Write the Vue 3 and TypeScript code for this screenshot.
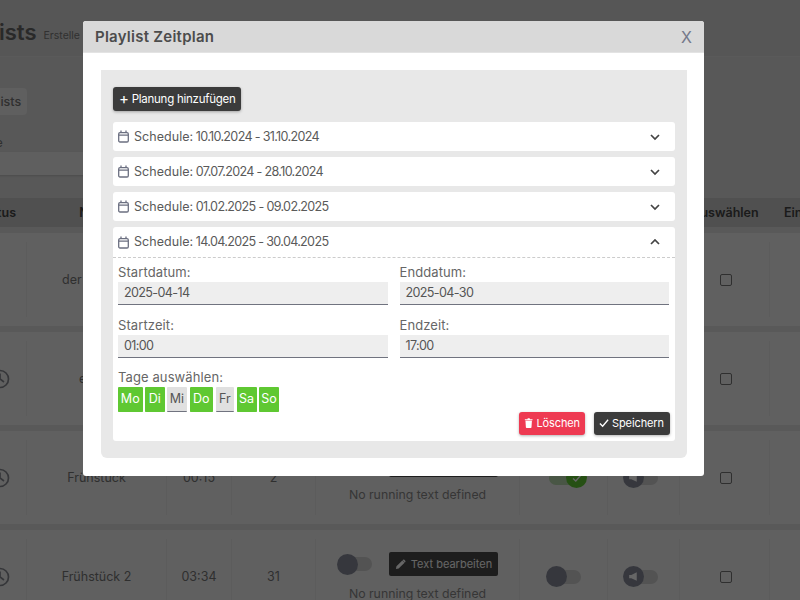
<script setup lang="ts">
const closed = ['10.10.2024 - 31.10.2024', '07.07.2024 - 28.10.2024', '01.02.2025 - 09.02.2025']
const days = [
  { n: 'Mo', on: true, w: 24.5 }, { n: 'Di', on: true, w: 19.5 }, { n: 'Mi', on: false, w: 20 }, { n: 'Do', on: true, w: 23.5 },
  { n: 'Fr', on: false, w: 18.5 }, { n: 'Sa', on: true, w: 20 }, { n: 'So', on: true, w: 20 },
]
const rows = [
  { name: 'der Morgen', time: '', count: '', text: false, clock: false, on: false },
  { name: 'essen', time: '', count: '', text: false, clock: true, on: false },
  { name: 'Frühstück', time: '00:15', count: '2', text: true, clock: true, on: true },
  { name: 'Frühstück 2', time: '03:34', count: '31', text: true, clock: true, on: false },
]
</script>

<template>
  <div class="page">
    <div class="behind">
      <header class="head"><h1>Playlists</h1><span class="sub">Erstelle und verwalte Playlists</span></header>
      <div class="tools">
        <span class="tab">Playlists</span>
        <span class="lbl">Suche</span>
        <div class="search"></div>
      </div>
      <div class="tbody">
        <div class="thead">
          <span class="c0">Status</span><span class="c1">Name</span><span class="c2"></span><span class="c3"></span>
          <span class="c4"></span><span class="c5"></span><span class="c6"></span><span class="c7">Auswählen</span><span class="c8">Einstellungen</span>
        </div>
        <div v-for="r in rows" :key="r.name" class="row">
          <div class="c0 cell">
            <svg v-if="r.clock" width="20" height="20" viewBox="0 0 20 20" fill="none" stroke="#85878f" stroke-width="1.700"><circle cx="10" cy="10" r="8.500"/><path d="M10 4.500V10l4 3"/></svg>
          </div>
          <div class="c1 cell">{{ r.name }}</div>
          <div class="c2 cell">{{ r.time }}</div>
          <div class="c3 cell">{{ r.count }}</div>
          <div class="c4 cell stack">
            <div v-if="r.text" class="textline">
              <span class="tog small"><i></i></span>
              <span class="editbtn">
                <svg width="11" height="11" viewBox="0 0 12 12" fill="#fff"><path d="M1 11l.6-3L8 1.600 10.400 4 4 10.400zM8.800.8a1 1 0 0 1 1.400 0l1 1a1 1 0 0 1 0 1.400l-.5.500L8.300 1.300z"/></svg>
                Text bearbeiten
              </span>
            </div>
            <span v-if="r.text" class="norun">No running text defined</span>
          </div>
          <div class="c5 cell"><span v-if="r.text" class="tog" :class="{ on: r.on }"><i><svg v-if="r.on" width="12" height="12" viewBox="0 0 12 12" fill="none" stroke="#fff" stroke-width="1.500"><path d="M2 6.500l2.800 2.500L10 3"/></svg></i></span></div>
          <div class="c6 cell"><span v-if="r.text" class="tog snd"><i><svg width="13" height="13" viewBox="0 0 12 12" fill="#fff"><path d="M2 4.500h2L9 2v8L4 7.500H2z"/></svg></i></span></div>
          <div class="c7 cell"><span class="check"></span></div>
          <div class="c8 cell"></div>
        </div>
      </div>
    </div>

    <div class="overlay">
      <div class="modal">
        <div class="mhead"><span class="mtitle">Playlist Zeitplan</span><span class="close">X</span></div>
        <div class="mbody">
          <div class="panel">
            <button class="btn dark add"><span class="plus">+</span> Planung hinzufügen</button>
            <div v-for="c in closed" :key="c" class="acc">
              <div class="acchead">
                <svg class="cal" width="11" height="13" viewBox="0 0 11 13" fill="none" stroke="#6b6f80" stroke-width="1.300"><rect x=".7" y="2.700" width="9.600" height="9.300" rx="1.300"/><path d="M.7 5.200h9.600M3 .5V3M8 .5V3"/></svg>
                <span class="sched"><span class="word">Schedule:</span> <span class="num">{{ c }}</span></span>
                <svg class="chev" width="12" height="12" viewBox="0 0 12 12" fill="none" stroke="#444" stroke-width="1.700"><path d="M2 4l4 4 4-4"/></svg>
              </div>
            </div>
            <div class="acc open">
              <div class="acchead dashed">
                <svg class="cal" width="11" height="13" viewBox="0 0 11 13" fill="none" stroke="#6b6f80" stroke-width="1.300"><rect x=".7" y="2.700" width="9.600" height="9.300" rx="1.300"/><path d="M.7 5.200h9.600M3 .5V3M8 .5V3"/></svg>
                <span class="sched"><span class="word">Schedule:</span> <span class="num">14.04.2025 - 30.04.2025</span></span>
                <svg class="chev" width="12" height="12" viewBox="0 0 12 12" fill="none" stroke="#444" stroke-width="1.700"><path d="M2 8l4-4 4 4"/></svg>
              </div>
              <div class="accbody">
                <div class="grid">
                  <label class="field"><span>Startdatum:</span><div class="input">2025-04-14</div></label>
                  <label class="field"><span>Enddatum:</span><div class="input">2025-04-30</div></label>
                  <label class="field"><span>Startzeit:</span><div class="input">01:00</div></label>
                  <label class="field"><span>Endzeit:</span><div class="input">17:00</div></label>
                </div>
                <div class="dayslbl">Tage auswählen:</div>
                <div class="days">
                  <span v-for="d in days" :key="d.n" class="day" :class="{ on: d.on }" :style="{ width: d.w + 'px' }">{{ d.n }}</span>
                </div>
                <div class="actions">
                  <button class="btn red">
                    <svg width="11" height="12" viewBox="0 0 11 12" fill="#fff"><path d="M1 1.500h3l.4-1h2.200l.4 1h3v1.200H1zM1.700 3.500h7.600l-.5 7.600a.9.900 0 0 1-.9.900H3.100a.9.900 0 0 1-.9-.9z"/></svg>
                    Löschen
                  </button>
                  <button class="btn dark save">
                    <svg width="10" height="10" viewBox="0 0 11 10" fill="none" stroke="#fff" stroke-width="1.500"><path d="M1 5.500l3 3 6-7"/></svg>
                    Speichern
                  </button>
                </div>
              </div>
            </div>
          </div>
        </div>
      </div>
    </div>
  </div>
</template>

<style>
html, body { margin: 0; }
</style>

<style scoped>
.page { position: relative; width: 800px; height: 600px; overflow: hidden; font-family: Inter, "Liberation Sans", sans-serif; background: #e4e4e4; }
.behind { width: 900px; margin-left: -50px; color: #666; }
.head { height: 57px; display: flex; align-items: center; gap: 7px; background: #d6d6d6; border-bottom: 1px solid #e0e0e0; box-sizing: border-box; padding-top: 8px; }
.head h1 { margin: 0 0 0 -2px; font-size: 22px; font-weight: 600; color: #666; white-space: nowrap; }
.sub { font-size: 10.500px; color: #7a7a7a; padding-top: 6px; white-space: nowrap; }
.tools { height: 141px; background: #dcdcdc; padding-top: 31px; box-sizing: border-box; display: flex; flex-direction: column; align-items: flex-start; }
.tab { font-size: 12.500px; font-weight: 500; line-height: 15px; padding: 6px; margin-left: 16px; background: #ededed; border-radius: 4px; color: #777; }
.lbl { font-size: 12px; line-height: 15px; margin-top: 20px; padding-left: 17px; color: #777; }
.search { width: 300px; height: 23px; margin-top: 2px; background: #eee; box-shadow: 0 1px 2px #bbb; }
.tbody { background: #dedede; }
.thead { display: flex; align-items: center; height: 29px; background: #c8c8c8; font-size: 12.500px; font-weight: 600; color: #444; margin-bottom: 6px; }
.thead span { text-align: center; white-space: nowrap; overflow: hidden; }
.thead .c0 { text-align: right; padding-right: 11px; }
.thead .c8 { text-align: left; padding-left: 14px; }
.row { display: flex; height: 93px; padding: 9px 0; box-sizing: border-box; background: #f0f0f0; margin-bottom: 6px; font-size: 12.500px; color: #777; }
.cell { display: flex; align-items: center; justify-content: center; border-right: 1px solid #e6e6e6; box-sizing: border-box; }
.c0 { width: 77px; flex: none; box-sizing: border-box; }
.row .c0 { justify-content: flex-end; padding-right: 16px; }
.c1 { width: 140px; flex: none; }
.c2 { width: 65px; flex: none; }
.c3 { width: 84px; flex: none; }
.c4 { width: 204px; flex: none; }
.c5 { width: 88px; flex: none; }
.c6 { width: 72px; flex: none; }
.c7 { width: 90px; flex: none; }
.c8 { width: 80px; flex: none; box-sizing: border-box; }
.row .c8 { border-right: 0; }
.stack { flex-direction: column; gap: 10px; }
.textline { display: flex; align-items: center; gap: 17px; }
.editbtn { display: inline-flex; align-items: center; gap: 5px; height: 24px; padding: 0 6px; background: #4a4a4a; border-radius: 2px; color: #fff; font-size: 11px; box-sizing: border-box; white-space: nowrap; }
.norun { font-size: 12.300px; line-height: 15px; color: #888; }
.tog { position: relative; display: inline-block; width: 32px; height: 14px; background: #cfcfcf; border-radius: 7px; margin-left: 3px; }
.tog i { position: absolute; left: -3px; top: -3.500px; width: 21px; height: 21px; border-radius: 50%; background: #878b9a; display: flex; align-items: center; justify-content: center; }
.tog.snd { margin-left: 0; margin-right: 3px; }
.tog.on { background: #b7d6ac; }
.tog.on i { left: auto; right: -6px; background: #5fc832; }
.check { width: 12px; height: 12px; box-sizing: border-box; border: 1px solid #777; border-radius: 2px; margin-left: 2px; }

.overlay { position: absolute; inset: 0; background: rgba(0, 0, 0, 0.6); display: flex; justify-content: flex-start; align-items: flex-start; padding: 21px 0 0 83px; box-sizing: border-box; }
.modal { width: 621px; height: 455px; background: #fff; border-radius: 3px; overflow: hidden; color: #555; }
.mhead { height: 31px; padding: 0 12px; background: #d9d9d9; display: flex; justify-content: space-between; align-items: center; border-bottom: 1px solid #e3e3e3; }
.mtitle { font-size: 15px; font-weight: 600; color: #4c4c4c; letter-spacing: 0.25px; }
.close { font-size: 16px; color: #74788a; font-weight: 400; }
.mbody { padding: 17px 17px 17px 18px; }
.panel { background: #e8e8e8; border-radius: 0 0 6px 6px; padding: 17px 12px; height: 388px; box-sizing: border-box; }
.btn { display: inline-flex; align-items: center; gap: 3px; border: 0; border-radius: 3px; font-family: inherit; font-size: 11.500px; font-weight: 400; color: #fff; box-shadow: 0 1px 3px rgba(0,0,0,.3); height: 23.500px; padding: 0 6px; box-sizing: border-box; white-space: nowrap; }
.dark { background: #3b3b3b; }
.red { background: #ee3a52; }
.add { margin-bottom: 11.500px; width: 128px; letter-spacing: -0.25px; }
.plus { font-size: 15px; font-weight: 400; line-height: 1; }
.acc { background: #fff; border-radius: 3px; margin-bottom: 6px; color: #5a5a5a; }
.acchead { height: 29px; display: flex; align-items: center; padding: 0 14px 0 5px; box-sizing: border-box; gap: 5px; }
.sched { flex: 1; white-space: nowrap; line-height: 16px; font-size: 12.500px; word-spacing: -1px; }
.word { font-size: 12.500px; letter-spacing: 0.05px; }
.num { font-size: 12.600px; letter-spacing: -0.68px; word-spacing: 0; }
.dashed { height: 31px; border-bottom: 1px dashed #ccc; }
.cal { flex: none; }
.accbody { padding: 6px 5px; height: 183px; box-sizing: border-box; position: relative; }
.grid { display: grid; grid-template-columns: 269.500px 269.500px; column-gap: 12px; row-gap: 11.300px; }
.field { display: flex; flex-direction: column; font-size: 13px; color: #666; gap: 1px; letter-spacing: 0.1px; }
.field span { line-height: 17px; }
.input { height: 23.300px; line-height: 22px; background: #eee; border-bottom: 1.500px solid #70737f; box-sizing: border-box; padding: 0 6px; font-size: 12.600px; letter-spacing: -0.65px; color: #555; }
.dayslbl { font-size: 13px; letter-spacing: 0.1px; color: #666; margin-top: 11px; line-height: 17px; }
.days { display: flex; gap: 2.500px; margin-top: 1.500px; }
.day { height: 25px; line-height: 24px; text-align: center; background: #e0e0e0; border-bottom: 1.500px solid #70737f; box-sizing: border-box; color: #555; font-size: 12.500px; border-radius: 1px; }
.day.on { background: #5fc832; color: #fff; border-bottom-color: #5fc832; }
.actions { position: absolute; right: 5.500px; bottom: 6px; display: flex; gap: 9px; }
.red { width: 66px; padding: 0 5px; font-size: 11px; letter-spacing: -0.1px; }
.save { width: 75.500px; padding: 0 5px; font-size: 11px; letter-spacing: -0.1px; }
</style>
